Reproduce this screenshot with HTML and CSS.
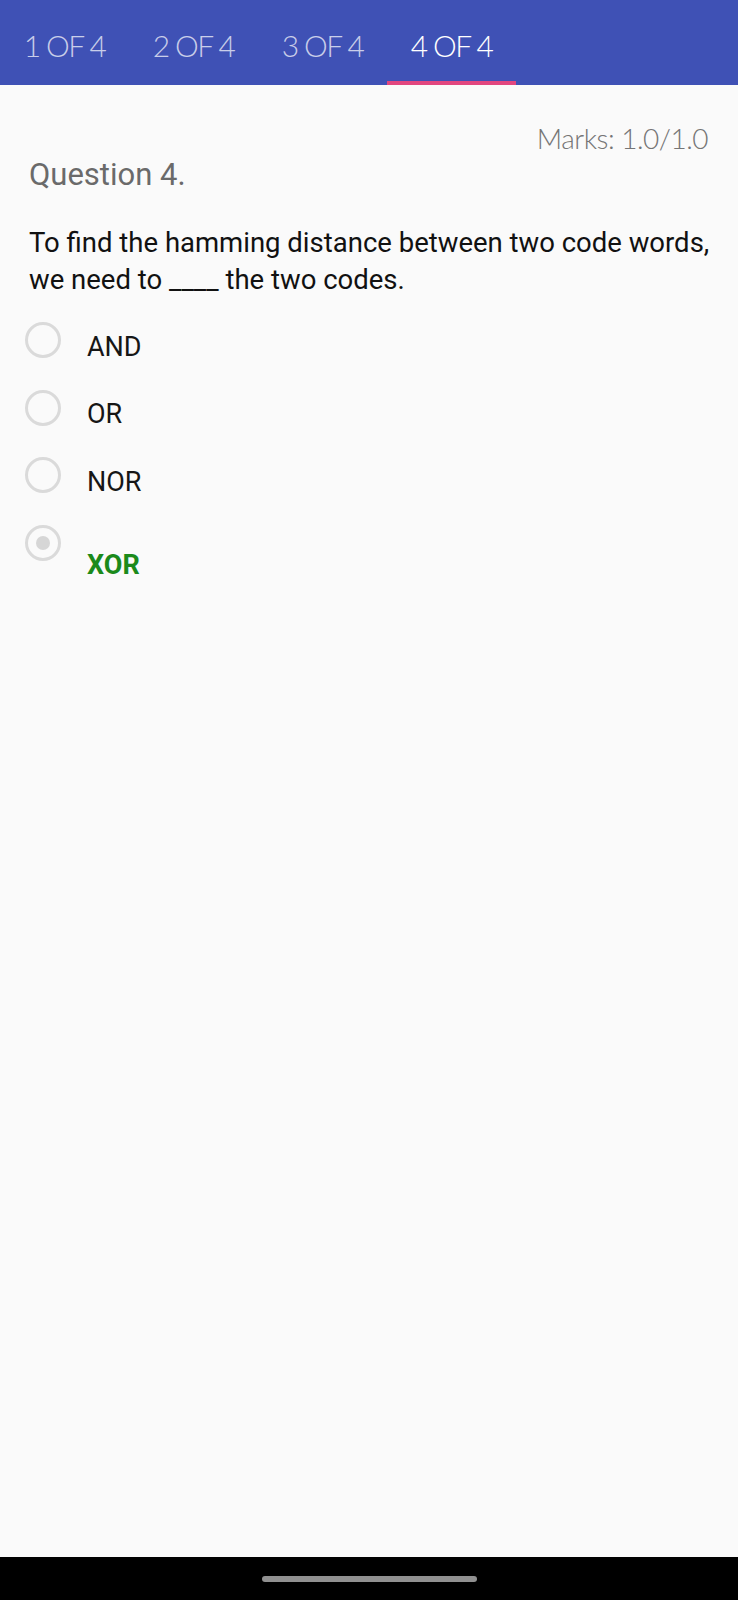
FILE: index.html
```html
<!DOCTYPE html>
<html lang="en">
<head>
<meta charset="utf-8">
<title>Quiz review</title>
<link rel="stylesheet" href="styles.css">
</head>
<body>
<div class="screen">
  <nav class="tabs">
    <div class="tab">1 OF 4</div>
    <div class="tab">2 OF 4</div>
    <div class="tab">3 OF 4</div>
    <div class="tab active">4 OF 4</div>
  </nav>
  <main class="content">
    <div class="marks">Marks: 1.0/1.0</div>
    <div class="qnum">Question 4.</div>
    <p class="qtext">To find the hamming distance between two code words, we need to ____ the two codes.</p>
    <ul class="options">
      <li class="option"><span class="radio"></span><span class="label">AND</span></li>
      <li class="option"><span class="radio"></span><span class="label">OR</span></li>
      <li class="option"><span class="radio"></span><span class="label">NOR</span></li>
      <li class="option"><span class="radio checked"></span><span class="label correct">XOR</span></li>
    </ul>
  </main>
  <footer class="navbar"><span class="handle"></span></footer>
</div>
</body>
</html>
```
FILE: styles.css
```css
html, body {
  margin: 0;
  padding: 0;
}
body {
  background: #fafafa;
  font-family: Roboto, "Liberation Sans", sans-serif;
}
.screen {
  display: flex;
  flex-direction: column;
  min-height: 100vh;
}
.tabs {
  display: flex;
  height: 85px;
  background: #3f51b5;
}
.tab {
  position: relative;
  width: 129px;
  box-sizing: border-box;
  padding-top: 30px;
  text-align: center;
  font-family: Lato, "Open Sans", sans-serif;
  font-weight: 300;
  font-size: 30px;
  line-height: 30px;
  letter-spacing: -1.6px;
  color: rgba(255, 255, 255, 0.72);
}
.tab.active {
  color: #ffffff;
}
.tab.active::after {
  content: "";
  position: absolute;
  left: 0;
  right: 0;
  bottom: 0;
  height: 4px;
  background: #e2467f;
}
.content {
  flex: 1;
  padding: 0 30px 0 29px;
}
.marks {
  margin-top: 39px;
  text-align: right;
  font-family: Lato, "Open Sans", sans-serif;
  font-weight: 300;
  font-size: 28px;
  line-height: 28px;
  letter-spacing: -0.5px;
  color: #757575;
}
.qnum {
  margin-top: 7px;
  font-size: 31px;
  line-height: 31px;
  color: #6a6a6a;
}
.qtext {
  margin: 34px -24px 0 0;
  font-size: 27.5px;
  line-height: 37px;
  color: #111111;
}
.options {
  list-style: none;
  margin: 24px 0 0 -4px;
  padding: 0;
}
.option {
  display: flex;
  align-items: flex-start;
  height: 67.5px;
}
.radio {
  position: relative;
  flex: none;
  width: 36px;
  height: 36px;
  box-sizing: border-box;
  border: 3px solid #dadada;
  border-radius: 50%;
}
.radio.checked::after {
  content: "";
  position: absolute;
  left: 8px;
  top: 8px;
  width: 14px;
  height: 14px;
  border-radius: 50%;
  background: #d6d6d6;
}
.label {
  margin: 11.5px 0 0 26px;
  font-size: 27px;
  line-height: 27px;
  color: #161616;
}
.label.correct {
  margin-top: 27.5px;
  font-weight: 700;
  color: #1b8a1b;
}
.navbar {
  height: 43px;
  background: #000000;
  display: flex;
  justify-content: center;
  padding-top: 19px;
  box-sizing: border-box;
}
.handle {
  width: 215px;
  height: 6px;
  border-radius: 3px;
  background: #909090;
}
```
